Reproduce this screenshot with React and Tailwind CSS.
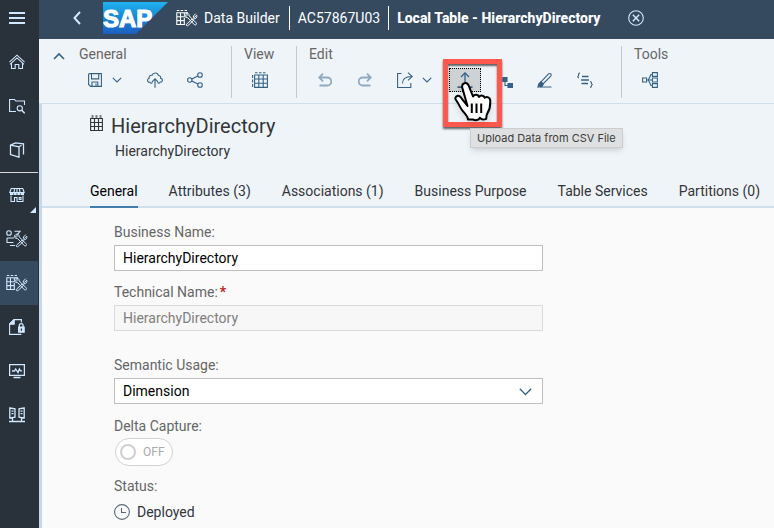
import React, { useState } from "react";

function Svg({ w = 16, h = 16, sw = 1.1, className = "", children }) {
  return (
    <svg
      width={w}
      height={h}
      viewBox={`0 0 ${w} ${h}`}
      fill="none"
      stroke="currentColor"
      strokeWidth={sw}
      className={`shrink-0 ${className}`}
      aria-hidden="true"
    >
      {children}
    </svg>
  );
}

/* ---------- navigation icons ---------- */

const HomeIcon = () => (
  <Svg>
    <path d="M.5 8.2 8 1.2l7.500 7M1 10.300 8 3.900l7 6.400M2.500 9v5.500h3.700v-4h3.600v4h3.700V9" />
  </Svg>
);

const FolderSearchIcon = () => (
  <Svg>
    <path d="M7 13.500H.6V1.500h4.900l1.300 1.500h8.700v4" />
    <circle cx="10.800" cy="10.300" r="2.600" />
    <path d="m12.700 12.200 3 3" strokeWidth="1.500" />
  </Svg>
);

const BookIcon = () => (
  <Svg sw={1.3}>
    <path d="M1.500 3.200 10 4.800v10.400L1.500 12.600zM1.500 3.200 6.500.800l8 1v10.700M10 4.800l2.500-1.600" />
  </Svg>
);

const StoreIcon = () => (
  <Svg>
    <path d="M2 1.500h12M2.200 1.500.8 5.500h14.400l-1.400-4M5.500 2 5 5.500M8 2v3.500M10.500 2l.5 3.500" />
    <path d="M1 7h3.200M4.700 7h3M8.300 7h3M11.800 7H15" strokeWidth="1.800" />
    <path d="M2 8.500v6h3.500v-4H8v4h6v-6M10.200 10.500h1.800v2h-1.800z" />
  </Svg>
);

function ToolsShape() {
  return (
    <g strokeWidth="1">
      <path d="m10.500 15.200 5.700-5.200 1.300 1.400-5.600 5.200c-.9.800-2.300-.500-1.400-1.400z" />
      <path d="M19.800 4.600 17.500 6.900l-.2 1.400 1.200.1 2.200-2.300c.7 2.200-.7 4-3 3.700l-1.200 1.100" />
      <path d="M9.800 4.300c1.800-.7 3.600.6 3.400 2.600l6.900 6.900c1.200 1.300-.6 3-1.800 1.800l-6.700-7c-2 .3-3.600-1.200-3.100-3.200l2 1.600 1.100-.9z" />
    </g>
  );
}

const TableToolsIcon = () => (
  <Svg w={22} h={18}>
    <path d="M.800 1.500h2.500M4.700 1.500h2.500M8.600 1.500H11" />
    <path d="M9 15.500H.800V3.800H12M.800 7.700H9M.800 11.600h8M4.500 3.800v11.700M8.300 3.800v2M8.300 9v6.500" />
    <ToolsShape />
  </Svg>
);

const ShapesToolsIcon = () => (
  <Svg w={22} h={18}>
    <circle cx="3" cy="3" r="2.300" />
    <path d="M8.500 1.300H14l-2.400 3M1 8h7M1 8v4.500h6.500M4 15.500h5" />
    <ToolsShape />
  </Svg>
);

const DocLockIcon = () => (
  <Svg>
    <path d="M12.400 15.400H.6V5L5 .600h7.400V3.500" />
    <path d="M.6 5.200 5.200.600v4.600z" fill="currentColor" />
    <path d="M10.300 8.500V6.500a1.900 1.900 0 0 1 3.800 0V8" strokeWidth="1.300" />
    <path d="M9.600 8h5.600v5.200H9.600z" fill="currentColor" />
    <path d="M12.400 9.500v2.200" stroke="#29313a" strokeWidth="1.300" />
  </Svg>
);

const MonitorIcon = () => (
  <Svg sw={1.3}>
    <path d="M.6 1.600h14.800v10.800H.6zM4.500 14.500h7" />
    <path d="M3 8h2.500l1.200-2L9 9.500 10.400 6l1 1.800H13" />
  </Svg>
);

const ServersIcon = () => (
  <Svg sw={1.3}>
    <path d="M.8 1l5.200.8v8.400L.8 11zM15.200 1l-5.200.8v8.400l5.200.8zM2.500 4.200h2M2.500 6.700h2M11.500 4.200h2M11.500 6.700h2M3.500 11v4M12.500 11v4M0 14.500h16" />
  </Svg>
);

/* ---------- toolbar icons ---------- */

const ChevronDown = () => (
  <Svg w={10} h={6}>
    <path d="m.8.800 4.200 4.200L9.200.800" />
  </Svg>
);

const SaveIcon = () => (
  <Svg w={14} h={14}>
    <path d="M.6 1.600a1 1 0 0 1 1-1h11.800v12.800H2.600l-2-2zM3.500.600v5.300h7.200V.600M4 13.400V9h5.800v4.400M8 10.500v2" />
  </Svg>
);

const CloudUpIcon = () => (
  <Svg>
    <path d="M5.500 10.500c-.8 1-2.300.7-2.600-.2C1.200 10.400.4 9.200.6 8c.2-1 .8-1.500 1.600-1.700C1.600 4.300 3.200 2.900 5 3.300 6.300.3 10.700.3 11.400 3.500c1.700 0 2.600 1.300 2.200 2.700 1.200.2 1.900 1.100 1.800 2.200-.1 1.200-1 1.900-2.200 1.900-.4.900-1.900 1.200-2.700.2" />
    <path d="M8 15.800V7M5 9.800l3-3 3 3" />
  </Svg>
);

const ShareIcon = () => (
  <Svg>
    <circle cx="2.800" cy="8" r="2.200" />
    <circle cx="13" cy="3" r="2.300" />
    <circle cx="13" cy="13" r="2.300" />
    <path d="m4.800 7 6.100-3M4.800 9l6.100 3" />
  </Svg>
);

const GridIcon = () => (
  <Svg>
    <path d="M3 .800h2.500M7 .800h2.500M11 .800h2.500M.600 3v3M.600 7.500v3M.600 12v3" />
    <path d="M2.600 3h12.800v12.400H2.600zM2.600 7h12.800M2.600 11.200h12.800M6.800 3v12.400M11.200 3v12.400" />
  </Svg>
);

const UndoIcon = () => (
  <Svg w={14} h={14} sw={1.8}>
    <path d="M5 .700 1.200 4.500 5 8.300M1.500 4.500h7.800a4 4 0 0 1 0 8H1.500" />
  </Svg>
);

const RedoIcon = () => (
  <Svg w={14} h={14} sw={1.8}>
    <path d="m9 .700 3.800 3.800L9 8.300M12.500 4.500H4.700a4 4 0 0 0 0 8h7.800" />
  </Svg>
);

const ExportIcon = () => (
  <Svg>
    <path d="M4.500 1.500H.6v14h13.200V11M5.500 11.500c0-4.500 2.500-7 9.200-7M11 .600l4.300 3.900L11 8.300" />
  </Svg>
);

const UploadIcon = () => (
  <Svg>
    <path d="M8 12.500V.900M4 5l4-4.100L12 5" strokeWidth="1.300" />
    <path d="M.500 15.200h15" strokeWidth="1.800" />
  </Svg>
);

const HierarchyIcon = () => (
  <Svg>
    <path d="M2 2v6h6M8 8v5.500h3" />
    <path d="M.500.500h4v4h-4zM6 5.500h4v4H6zM11 11.500h4.500v4H11z" fill="currentColor" />
  </Svg>
);

const PenIcon = () => (
  <Svg>
    <path d="M4 9.800 11.600 1.900a1.500 1.500 0 0 1 2.300.2 1.600 1.600 0 0 1-.1 2L6 12zM3 15h11.500" />
    <path d="M4 9.800 6.300 12 4.800 14.400l-3.900.6L2 11.500z" fill="currentColor" />
  </Svg>
);

const CodeListIcon = () => (
  <Svg>
    <path d="M3 1C1.300 1 1.600 2.500 1.600 3.200S1.200 4.500.300 4.700c1 .2 1.300.7 1.300 1.500M13 9.500c1.500 0 1.300 1 1.300 1.500s.300 1.300 1.400 1.500c-1.100.2-1.400.7-1.400 1.400s.200 1.400-1.300 1.400" />
    <path d="M5 4.500h6.500M4 8h8M4.500 11.500H11" strokeWidth="1.300" />
  </Svg>
);

const LineageIcon = () => (
  <Svg>
    <path d="M.600 6h4v4h-4zM10.400.600h5v3.800h-5zM10.400 6h5v4h-5zM10.400 11.600h5v3.800h-5zM4.600 8h5.800M10.400 2.500H9L6.300 8 9 13.500h1.400" />
  </Svg>
);

const SapLogo = () => (
  <svg width="65" height="32" viewBox="0 0 65 32" className="shrink-0" role="img" aria-label="SAP">
    <defs>
      <linearGradient id="sapBlue" x1="0" y1="0" x2="0" y2="1">
        <stop offset="0" stopColor="#1fb3ee" />
        <stop offset="0.500" stopColor="#1686d6" />
        <stop offset="1" stopColor="#1d5fbe" />
      </linearGradient>
    </defs>
    <path d="M0 0h65L33 32H0z" fill="url(#sapBlue)" />
    <text
      x="0"
      y="25"
      fill="#fff"
      stroke="#fff"
      strokeWidth="1.200"
      fontFamily="'Liberation Sans', Arial, sans-serif"
      fontWeight="700"
      fontSize="24"
    >
      SAP
    </text>
  </svg>
);

/* ---------- shell ---------- */

function NavItem({ label, active, badge, children }) {
  return (
    <a
      href="#"
      aria-label={label}
      className={`relative flex h-11 items-center justify-center ${active ? "bg-[#354a5f]" : ""}`}
    >
      {children}
      {badge && (
        <svg width="6" height="6" viewBox="0 0 6 6" className="absolute right-0.5 bottom-1" aria-hidden="true">
          <path d="M6 0v6H0z" fill="#d1e8ff" />
        </svg>
      )}
    </a>
  );
}

function Sidebar() {
  return (
    <nav className="w-[39px] shrink-0 bg-[#29313a] pr-px text-[#d1e8ff]">
      <button type="button" aria-label="Menu" className="flex h-10 w-full items-center justify-center pr-1 pb-1">
        <Svg w={16} h={14} sw={2}>
          <path d="M0 2h16M0 7h16M0 12h16" />
        </Svg>
      </button>
      <div className="border-b border-[#d9d9d9]">
        <NavItem label="Home"><span className="pr-1"><HomeIcon /></span></NavItem>
        <NavItem label="Repository Explorer"><span className="pr-1"><FolderSearchIcon /></span></NavItem>
        <NavItem label="Catalog"><span className="pr-1"><BookIcon /></span></NavItem>
      </div>
      <NavItem label="Data Marketplace" badge><span className="pr-1"><StoreIcon /></span></NavItem>
      <NavItem label="Business Builder"><span className="pr-1"><ShapesToolsIcon /></span></NavItem>
      <NavItem label="Data Builder" active><span className="pr-1"><TableToolsIcon /></span></NavItem>
      <NavItem label="Data Access Controls"><span className="pr-1"><DocLockIcon /></span></NavItem>
      <NavItem label="Data Integration Monitor"><span className="pr-1"><MonitorIcon /></span></NavItem>
      <NavItem label="Connections"><span className="pr-1"><ServersIcon /></span></NavItem>
    </nav>
  );
}

function ShellBar() {
  return (
    <header className="flex h-[39px] items-center bg-[#354a5f] pb-1 pl-7 whitespace-nowrap text-white">
      <button type="button" aria-label="Back" className="flex w-5 justify-center text-[#d1e8ff]">
        <Svg w={8} h={14} sw={2}>
          <path d="M7 1 1.500 7 7 13" />
        </Svg>
      </button>
      <span className="ml-4"><SapLogo /></span>
      <span className="ml-2"><TableToolsIcon /></span>
      <a href="#" className="ml-1.5 border-r border-white pr-[9px] leading-6">Data Builder</a>
      <a href="#" className="border-r border-white px-2 leading-6">AC57867U03</a>
      <span className="pl-2 font-extrabold">Local Table - HierarchyDirectory</span>
      <button type="button" aria-label="Close" className="ml-7 text-[#d1e8ff]">
        <Svg>
          <circle cx="8" cy="8" r="7.300" />
          <path d="m4.800 4.800 6.400 6.400M11.200 4.800l-6.400 6.400" strokeWidth="1.500" />
        </Svg>
      </button>
    </header>
  );
}

/* ---------- toolbar ---------- */

function Group({ title, last, children }) {
  return (
    <section className={`h-[52px] shrink-0 pl-3 pr-5 ${last ? "" : "border-r border-[#c4c9ce]"}`}>
      <h2 className="leading-4 text-[#666]">{title}</h2>
      <div className="mt-1.5 flex gap-2">{children}</div>
    </section>
  );
}

function Tool({ label, disabled, children }) {
  return (
    <button
      type="button"
      aria-label={label}
      disabled={disabled}
      className="flex h-6 w-8 items-center justify-center disabled:opacity-50"
    >
      {children}
    </button>
  );
}

function SplitTool({ label, children }) {
  return (
    <div className="flex w-[52px]">
      <Tool label={label}>{children}</Tool>
      <button type="button" aria-label={`${label} menu`} className="flex w-3 items-center justify-center">
        <ChevronDown />
      </button>
    </div>
  );
}

function HandCursor() {
  return (
    <svg
      width="40"
      height="42"
      viewBox="0 0 40 42"
      className="absolute top-3 left-1 z-20 max-w-none drop-shadow-md"
      aria-hidden="true"
    >
      <path
        d="M14.500 26 9.300 7.800C8.200 3.200 13.500 1.200 15.500 5.200L20 16.500c1.400-2.600 5.200-2.300 6 .4 1.600-2 5-1.600 5.700.8 2.200-1.400 5.200-.4 5.500 2.400.300 5.200-.600 9.700-2.600 12.800-1.300 2.100-1.400 3.800-1.400 6-2.200.9-5 .6-6.200-1.200-1.500 2.800-4.800 3-7 1.800H15c-.2-4-3.500-5.800-6-9.500-2.400-3.400-3.600-6.800-6-10-1.800-3 1.200-5.300 4.200-3.400z"
        fill="#fff"
        stroke="#000"
        strokeWidth="2"
        strokeLinejoin="round"
      />
      <path d="M18.800 23.500v9.500M23.500 23.500v9.500M28.200 23.500v9.500" stroke="#000" strokeWidth="2" />
    </svg>
  );
}

function UploadTool() {
  return (
    <div className="relative">
      <button
        type="button"
        aria-label="Upload Data from CSV File"
        className="flex h-6 w-8 items-center justify-center border border-dotted border-black bg-[#cfd2d5]"
      >
        <UploadIcon />
      </button>
      <div className="absolute -top-[9px] -left-1.5 z-10 h-[68px] w-[59px] border-5 border-[#ff584c] shadow-[0_2px_2px_rgba(0,0,0,0.6),inset_0_2px_2px_rgba(0,0,0,0.6)]" />
      <HandCursor />
      <div
        role="tooltip"
        className="absolute top-[60px] left-[21px] z-10 border border-[#cccdce] bg-[#dfe0e1] px-1.5 font-['Inter',sans-serif] text-[11px] leading-[18px] whitespace-nowrap text-[#3c3c3c] shadow-md"
      >
        Upload Data from CSV File
      </div>
    </div>
  );
}

function Toolbar() {
  return (
    <div className="flex h-[65px] border-b border-[#d0dfec] bg-[#eff4f9] pt-[7px] pl-1.5 text-[#346187]">
      <button type="button" aria-label="Collapse toolbar" className="flex h-5 w-[22px] items-center justify-end pr-0.5">
        <Svg w={12} h={8} sw={1.6}>
          <path d="m1 7 5-5 5 5" />
        </Svg>
      </button>
      <Group title="General">
        <SplitTool label="Save"><SaveIcon /></SplitTool>
        <Tool label="Deploy"><CloudUpIcon /></Tool>
        <Tool label="Share"><ShareIcon /></Tool>
      </Group>
      <Group title="View">
        <Tool label="Data Viewer"><GridIcon /></Tool>
      </Group>
      <Group title="Edit">
        <Tool label="Undo" disabled><UndoIcon /></Tool>
        <Tool label="Redo" disabled><RedoIcon /></Tool>
        <SplitTool label="Export"><ExportIcon /></SplitTool>
        <UploadTool />
        <Tool label="Hierarchies"><HierarchyIcon /></Tool>
        <Tool label="Edit Custom Annotations"><PenIcon /></Tool>
        <Tool label="Code"><CodeListIcon /></Tool>
      </Group>
      <Group title="Tools" last>
        <Tool label="Impact and Lineage"><LineageIcon /></Tool>
      </Group>
    </div>
  );
}

/* ---------- object page ---------- */

const TABS = [
  "General",
  "Attributes (3)",
  "Associations (1)",
  "Business Purpose",
  "Table Services",
  "Partitions (0)",
];

function ObjectHeader() {
  const [tab, setTab] = useState("General");
  return (
    <div className="border-b-2 border-[#cfdfee] bg-[#eff4f9] pl-12">
      <div className="flex gap-2 pt-2.5 text-[#32363a]">
        <Svg w={13} h={16} className="mt-px">
          <path d="M2.500 0v3M6.500 0v3M10.500 0v3" strokeWidth="2" opacity="0.600" />
          <path d="M.600 3.500h11.800v12H.600zM.600 7.500h11.800M.600 11.500h11.800M4.500 3.500v12M8.500 3.500v12" />
        </Svg>
        <div>
          <h1 className="text-xl leading-6">HierarchyDirectory</h1>
          <p className="mt-[3px] pl-1 leading-5">HierarchyDirectory</p>
        </div>
      </div>
      <div role="tablist" className="-mb-0.5 mt-3 flex gap-[31px] whitespace-nowrap">
        {TABS.map((t) => (
          <button
            key={t}
            type="button"
            role="tab"
            aria-selected={t === tab}
            onClick={() => setTab(t)}
            className={`h-[35px] border-b-2 pt-0.5 ${
              t === tab ? "border-[#427cac] text-black" : "border-transparent text-[#32363a]"
            }`}
          >
            {t}
          </button>
        ))}
      </div>
    </div>
  );
}

function Form() {
  const label = "block leading-5 text-[#666]";
  const field = "block h-[26px] w-full border px-2 text-sm";
  return (
    <form className="max-w-[501px] pt-3.5 pl-[72px]">
      <label htmlFor="bname" className={label}>Business Name:</label>
      <input id="bname" defaultValue="HierarchyDirectory" className={`${field} mt-[3px] border-[#bfbfbf] bg-white text-black`} />

      <label htmlFor="tname" className={`${label} mt-[11px]`}>
        Technical Name:<span className="pl-0.5 font-bold text-[#cc1919]">*</span>
      </label>
      <input
        id="tname"
        disabled
        defaultValue="HierarchyDirectory"
        className={`${field} mt-[3px] border-[#dadada] bg-[#f7f7f7] text-[#808080]`}
      />

      <label htmlFor="usage" className={`${label} mt-6`}>Semantic Usage:</label>
      <div className="relative mt-[3px]">
        <select id="usage" defaultValue="Dimension" className={`${field} appearance-none border-[#bfbfbf] bg-white text-black`}>
          <option>Dimension</option>
          <option>Fact</option>
          <option>Relational Dataset</option>
        </select>
        <span className="pointer-events-none absolute top-2.5 right-[11px] text-[#346187]">
          <Svg w={13} h={8} sw={1.3}>
            <path d="m.800.800 5.700 5.700L12.200.800" />
          </Svg>
        </span>
      </div>

      <label htmlFor="delta" className={`${label} mt-3`}>Delta Capture:</label>
      <label className="mt-0.5 ml-px flex h-7 w-[58px] items-center gap-[7px] rounded-full border border-[#d2d2d2] bg-white pl-1 text-xs text-[#aaa]">
        <input
          id="delta"
          type="checkbox"
          role="switch"
          disabled
          className="size-4 appearance-none rounded-full border-2 border-[#cfcfcf] bg-white"
        />
        OFF
      </label>

      <p className={`${label} mt-2.5`}>Status:</p>
      <p className="mt-1.5 flex items-center gap-[7px] leading-5 text-[#32363a]">
        <Svg className="text-[#5b6a78]">
          <circle cx="8" cy="8" r="7.400" />
          <path d="M7.500 4v4.500H12" />
        </Svg>
        Deployed
      </p>
    </form>
  );
}

export default function App() {
  return (
    <div className="flex min-h-screen overflow-hidden bg-[#fafafa] font-['Roboto','Liberation_Sans',sans-serif] text-sm">
      <Sidebar />
      <div className="flex min-w-0 flex-1 flex-col">
        <ShellBar />
        <Toolbar />
        <main className="flex-1 border-l-3 border-[#c6d7ea]">
          <ObjectHeader />
          <Form />
        </main>
      </div>
    </div>
  );
}
